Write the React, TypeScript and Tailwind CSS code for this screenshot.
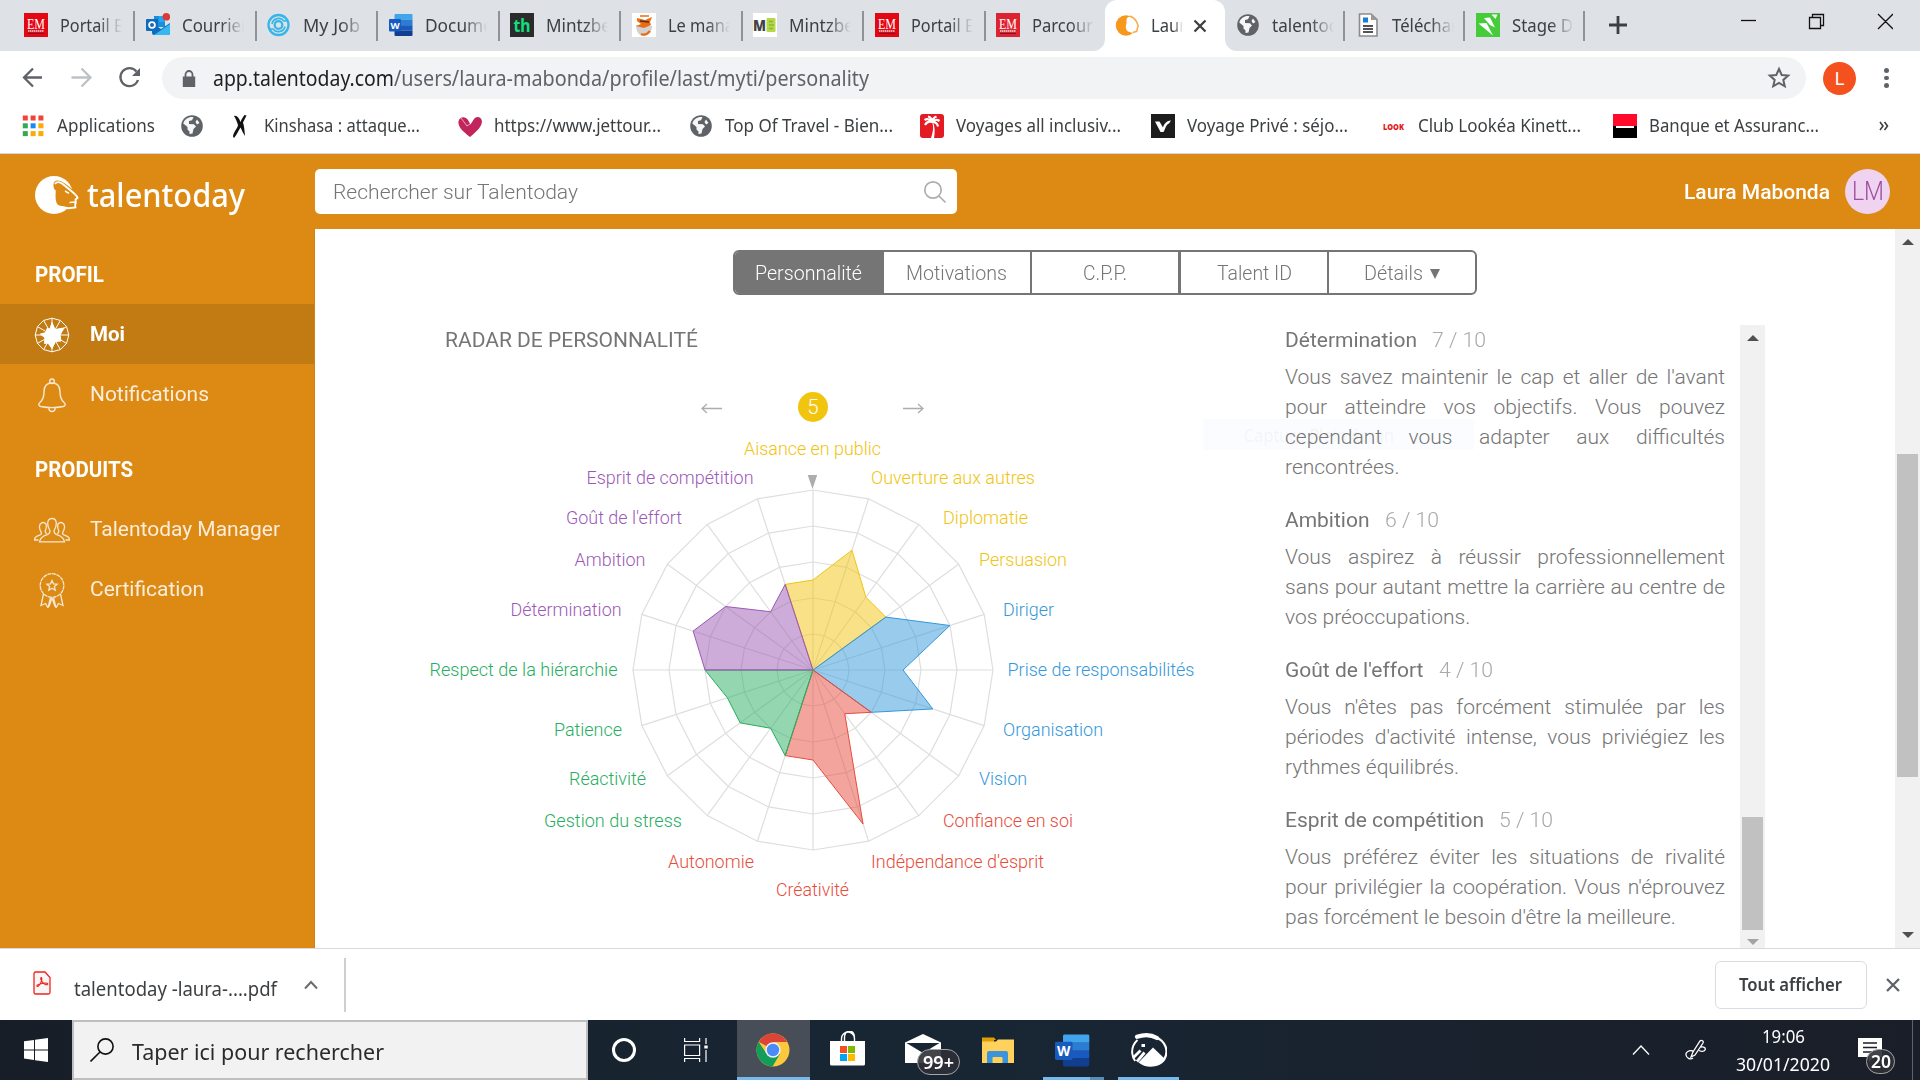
import React, { useLayoutEffect, useRef, useState } from "react";

/* Text run condensed or widened to an exact width. */
function Fit({ w, className = "", children }: { w: number; className?: string; children: React.ReactNode }) {
  const ref = useRef<HTMLSpanElement>(null);
  const [k, setK] = useState(1);
  useLayoutEffect(() => {
    if (ref.current && ref.current.offsetWidth) setK(w / ref.current.getBoundingClientRect().width);
  }, []);
  return (
    <span className={`block shrink-0 whitespace-nowrap ${className}`} style={{ width: w }}>
      <span ref={ref} className="inline-block origin-left" style={{ transform: `scaleX(${k})` }}>
        {children}
      </span>
    </span>
  );
}

/* ---------- small icons (24 x 24) ---------- */
const Svg = ({ children, c = "" }: { children: React.ReactNode; c?: string }) => (
  <svg viewBox="0 0 24 24" className={`h-6 w-6 shrink-0 ${c}`}>{children}</svg>
);

const EmIcon = ({ light }: { light?: boolean }) => (
  <Svg>
    <rect width="24" height="24" fill={light ? "#dd2230" : "#e30613"} />
    <text x="12" y="15.500" fontSize="15" textAnchor="middle" fill="#fff" fontFamily="Liberation Serif, serif" textLength="18" lengthAdjust="spacingAndGlyphs">EM</text>
    <path d="M4 18h16" stroke="#fff" strokeWidth="1.600" strokeDasharray="1.500 .500" opacity=".85" />
    <path d="M4 20.500h16" stroke="#7c1030" strokeWidth="1" />
  </Svg>
);
const OutlookIcon = () => (
  <Svg>
    <path d="M8 3h11v11H8z" fill="#1490df" />
    <path d="M13 3h6v6h-6z" fill="#28a8ea" />
    <path d="M6 10l9 6 9-6v10a2 2 0 0 1-2 2H8a2 2 0 0 1-2-2z" fill="#0f6cbd" />
    <path d="M24 11L8 22h14a2 2 0 0 0 2-2z" fill="#35b8f1" />
    <rect y="6" width="12" height="12" rx="1" fill="#0f6cbd" />
    <circle cx="6" cy="12" r="2.900" fill="none" stroke="#fff" strokeWidth="1.800" />
    <circle cx="20.300" cy="3.800" r="3.800" fill="#d93a3a" />
  </Svg>
);
const JobIcon = () => (
  <Svg>
    <g fill="none" stroke="#35b6e8" strokeWidth="2.300">
      <circle cx="11.500" cy="12" r="10" />
      <circle cx="11.500" cy="12" r="3.800" />
      <path d="M5 11A6.800 6.800 0 0 1 17 8h4.500M18 13.500A6.800 6.800 0 0 1 6 16H2.500" strokeWidth="1.700" />
    </g>
  </Svg>
);
const WordIcon = ({ c = "" }: { c?: string }) => (
  <Svg c={c}>
    <path d="M6.500 1h16a1 1 0 0 1 1 1v4.700h-18V2a1 1 0 0 1 1-1z" fill="#41a5ee" />
    <path d="M5.500 6.700h18v5.500h-18z" fill="#2b7cd3" />
    <path d="M5.500 12.200h18v5.300h-18z" fill="#185abd" />
    <path d="M5.500 17.500h18V22a1 1 0 0 1-1 1h-16a1 1 0 0 1-1-1z" fill="#103f91" />
    <rect y="6" width="12" height="12.500" rx="1" fill="#185abd" />
    <text x="6" y="15.500" fontSize="9.500" fontWeight="700" textAnchor="middle" fill="#fff" fontFamily="Open Sans, sans-serif">W</text>
  </Svg>
);
const ThIcon = () => (
  <Svg>
    <rect width="24" height="24" fill="#2b2b2b" />
    <text x="12" y="18.500" fontSize="17" fontWeight="700" textAnchor="middle" fill="#12e07f" fontFamily="Noto Sans, sans-serif" textLength="17" lengthAdjust="spacingAndGlyphs">th</text>
  </Svg>
);
const CupIcon = () => (
  <Svg>
    <rect width="24" height="24" fill="#fff" />
    <path d="M4 12c0 9 5 11 8 11s8-3 8-10z" fill="#d4d2d0" />
    <path d="M5 5l8 2 7-3-2 5 1 3-7 3-8-2 5-2-4-3z" fill="#e96d13" />
    <path d="M8 8l9 1" stroke="#5b2c14" strokeWidth="1.300" fill="none" />
    <path d="M9 21c3 1.500 6 .500 9-3" stroke="#e96d13" strokeWidth="2.200" fill="none" />
    <path d="M8 3h9" stroke="#e96d13" strokeWidth="1.500" />
  </Svg>
);
const MbIcon = () => (
  <Svg>
    <rect width="24" height="24" fill="#fff" />
    <text x="0" y="17.500" fontSize="16" fontWeight="800" fill="#444" fontFamily="Open Sans, sans-serif" textLength="13" lengthAdjust="spacingAndGlyphs">M</text>
    <rect x="13.500" y="5" width="9" height="14" rx="1" fill="#b5d84a" />
    <path d="M16 8.500h4M16 12h5M16 15.500h4" stroke="#8db534" strokeWidth="1.300" />
  </Svg>
);
const LionIcon = () => (
  <Svg>
    <circle cx="11" cy="12.500" r="10.200" fill="#f7981d" />
    <path d="M11.500 7c0-2.500 2-4 4.500-3 4 2 6 4.500 7.500 8.500l-1 3-.500 3.500-4 1-5-1.500c-2.500-1.500-2.500-5-1.500-8.500z" fill="#fff" />
    <path d="M15 3c3 1 5 3 6.500 5.500l1.800 4.500-1 2.300-.500 3-4 1.200" fill="none" stroke="#f9ab49" strokeWidth="1.500" />
  </Svg>
);
const Globe = () => (
  <Svg>
    <circle cx="12" cy="12" r="10.800" fill="#5f6368" />
    <path d="M13.500 3.200l-1.500 3-3 .8v3l5 .3 2 2.200-2.500 2.500-1 4.500-3 .5v-2.500l-2-2v-2.500L3.300 9.500C4.500 5 9 2.500 13.500 3.200zM17 5.500l2.500 3.500-2.500 1.500-1.500-2.500z" fill="#fff" opacity=".95" />
  </Svg>
);
const DocIcon = () => (
  <Svg>
    <path d="M3.500 1h11.500l6 5.500V23H3.500z" fill="#fff" stroke="#8c8c8c" strokeWidth="1.600" />
    <path d="M15 1v6h6" fill="#9a9a9a" />
    <rect x="7" y="4.500" width="5" height="5" fill="#1a7fd0" />
    <path d="M7 13h10M7 16h10M7 19h10" stroke="#1c1c1c" strokeWidth="1.500" />
  </Svg>
);
const StageIcon = () => (
  <Svg>
    <rect width="24" height="24" fill="#46cb3a" />
    <path d="M2.500 10.500l8-.5 6.500 12.500zM8 5l6-.5 5 10-5-2.500z" fill="#fff" />
    <path d="M15.500 1.500h6l-2 4.500z" fill="#fff" />
  </Svg>
);
const AppsIcon = () => (
  <Svg>
    {["#f44336", "#f44336", "#f44336", "#34a853", "#1a89f5", "#fbab04", "#34a853", "#fbab04", "#fbab04"].map((f, i) => (
      <rect key={i} x={0.800 + (i % 3) * 7.800} y={1.500 + Math.floor(i / 3) * 7.800} width="5" height="5" fill={f} />
    ))}
  </Svg>
);
const CrossFigure = () => (
  <Svg>
    <path d="M6 2c3-1 5.500 3 6.500 6 1-3 3-5.500 4-7l2 .5-3.500 7c1.500 5 1.500 9 2 13.500-1.500-2-3-5.500-4.500-8.500-2 3-3 6-6.500 10.500-1.500-1-1-3 0-5 2-4 4-6 4-8-1-3-2-6-4-9z" fill="#111" />
  </Svg>
);
const HeartIcon = () => (
  <Svg>
    <path d="M12 23C3 16 0 12 .5 7.500 1 3 7 1.500 10 6l2.500 4.500L16 5c2-3.500 7.500-2.500 7.900 2 .3 5-4 9.500-11.900 16z" fill="#c2255c" />
    <path d="M3 4l6 8 3-2" stroke="#fff" strokeWidth="1" fill="none" opacity=".6" />
  </Svg>
);
const PalmIcon = () => (
  <Svg>
    <rect width="24" height="24" rx="3" fill="#e41b23" />
    <path d="M12.500 8c-3-1-6 0-7.500 3M12.500 8C10 5.500 7 4.500 4.500 6M12.500 8C12 5 10 3 8 2.500M12.500 8c0-3 1.500-4.500 4-5.500M12.500 8c2-2.500 5-2.500 7-1M12.500 8c3 0 5 2 5.500 4.500" stroke="#fff" strokeWidth="2.200" fill="none" />
    <path d="M12 8c2 5 1 10-1 16h3c1-5 1-11-1-16z" fill="#fff" />
  </Svg>
);
const VpIcon = () => (
  <Svg>
    <rect width="24" height="24" fill="#1d1d1d" />
    <path d="M4 7.500h4.500l3.500 6c1-3.500 3-6.500 8-7l-2 3c-3 1-3.500 5-5.500 8.500h-3z" fill="#fff" />
  </Svg>
);
const LookIcon = () => (
  <Svg>
    <text x="1" y="15.500" fontSize="9" fontWeight="800" fill="#e21b1b" fontFamily="Open Sans, sans-serif" textLength="21" lengthAdjust="spacingAndGlyphs">LOOK</text>
  </Svg>
);
const SgIcon = () => (
  <Svg>
    <rect width="24" height="12" fill="#ff0a2b" />
    <rect y="12" width="24" height="12" fill="#000" />
    <rect x="3" y="12" width="18" height="2" fill="#fff" />
  </Svg>
);

/* ---------- browser chrome ---------- */
const tabs: [React.ReactNode, string, number, string][] = [
  [<EmIcon />, "Portail E", 63, "w-[121.5px]"],
  [<OutlookIcon />, "Courrier", 66, "w-[121.5px]"],
  [<JobIcon />, "My Job", 57, "w-[121.5px]"],
  [<WordIcon />, "Docume", 68, "w-[121.5px]"],
  [<ThIcon />, "Mintzbe", 65, "w-[121.5px]"],
  [<CupIcon />, "Le mana", 66, "w-[121.5px]"],
  [<MbIcon />, "Mintzbe", 65, "w-[121.5px]"],
  [<EmIcon />, "Portail E", 63, "w-[121.5px]"],
  [<EmIcon light />, "Parcour", 61, "w-[119.5px]"],
  [<Globe />, "talentoc", 65, "w-[120px]"],
  [<DocIcon />, "Téléchar", 66, "w-[120px]"],
  [<StageIcon />, "Stage D", 61, "w-[120px]"],
];

function Tab({ t, sep = true }: { t: (typeof tabs)[number]; sep?: boolean }) {
  return (
    <div className={`flex h-[51px] shrink-0 items-center pl-[10.5px] ${t[3]}`}>
      <div className="-mt-px">{t[0]}</div>
      <div className="-mt-[2px] ml-3 w-[62px] shrink-0 overflow-hidden [mask-image:linear-gradient(90deg,#000_62%,transparent_100%)]">
        <Fit w={t[2]} className="text-[18px] leading-6 text-[#3c4043]">{t[1]}</Fit>
      </div>
      {sep && <div className="ml-auto h-[30px] w-[2px] bg-[#8f9296]" />}
    </div>
  );
}

function TabStrip() {
  return (
    <div className="flex h-[51px] bg-[#dee1e6] pl-[13.5px]">
      {tabs.slice(0, 9).map((t, i) => <Tab key={i} t={t} sep={i < 8} />)}
      <div className="relative flex h-[51px] w-[120px] shrink-0 items-center rounded-t-xl bg-white pl-[10px]">
        <svg viewBox="0 0 144 12" className="absolute -left-3 bottom-0 h-3 w-36"><path d="M0 12A12 12 0 0 0 12 0V12zM144 12A12 12 0 0 1 132 0V12z" fill="#fff" /></svg>
        <div className="-mt-px"><LionIcon /></div>
        <div className="-mt-[2px] ml-3 w-[32px] shrink-0 overflow-hidden [mask-image:linear-gradient(90deg,#000_70%,transparent_100%)]">
          <Fit w={35} className="text-[18px] leading-6 text-[#3c4043]">Laur</Fit>
        </div>
        <svg viewBox="0 0 14 14" className="ml-[10px] h-[14px] w-[14px]"><path d="M1.500 1.500l11 11M12.500 1.500l-11 11" stroke="#3c4043" strokeWidth="2.300" /></svg>
      </div>
      {tabs.slice(9).map((t, i) => <Tab key={i} t={t} />)}
      <svg viewBox="0 0 18 18" className="mt-4 ml-6 h-[18px] w-[18px] shrink-0"><path d="M9 0v18M0 9h18" stroke="#3c4043" strokeWidth="2.800" /></svg>
      <svg viewBox="0 0 152 17" className="mt-[13px] ml-[114px] h-[17px] w-[152px] shrink-0" fill="none" stroke="#111" strokeWidth="1.300">
        <path d="M0 7.500h15" /><path d="M68.500 4.500h11v11h-11zM71.500 4.500v-3h11v11h-3M137 1l15 15M152 1l-15 15" />
      </svg>
    </div>
  );
}

function Toolbar() {
  return (
    <div className="flex h-[54px] items-center bg-white">
      <svg viewBox="0 0 120 24" className="ml-[22px] h-6 w-[120px] shrink-0" fill="none" strokeWidth="2.300">
        <path d="M20 11.500H2M11 2.500l-9 9 9 9" stroke="#5f6368" />
        <path d="M49.500 11.500h18M59.500 2.500l9 9-9 9" stroke="#bdc1c6" />
        <path d="M114.500 5.500A9 9 0 1 0 116 14" stroke="#5f6368" />
        <path d="M118 2v8h-8z" fill="#5f6368" />
      </svg>
      <div className="ml-5 flex h-[42px] w-[1644px] shrink-0 items-center rounded-full bg-[#f1f3f4] pl-[20px]">
        <svg viewBox="0 0 14 18" className="mt-px h-[18px] w-[14px]"><path d="M.8 6.500h12.400V17H.8z" fill="#5f6368" /><path d="M3.500 7V4.500a3.500 3.500 0 0 1 7 0V7" fill="none" stroke="#5f6368" strokeWidth="1.800" /></svg>
        <Fit w={181} className="mt-[2px] ml-[17px] text-[21px] text-[#202124]">app.talentoday.com</Fit>
        <Fit w={475} className="mt-[2px] text-[21px] text-[#5f6368]">/users/laura-mabonda/profile/last/myti/personality</Fit>
        <svg viewBox="0 0 24 24" className="mr-[15px] ml-auto h-6 w-6"><path d="M12 3l2.700 6 6.500.6-4.900 4.300 1.500 6.400L12 17l-5.800 3.300 1.500-6.400L2.800 9.600 9.300 9z" fill="none" stroke="#5f6368" strokeWidth="2" /></svg>
      </div>
      <div className="ml-[17px] flex h-[33px] w-[33px] items-center justify-center rounded-full bg-[#f4511e] font-[Roboto] text-[18px] text-white">L</div>
      <div className="ml-[28px] flex flex-col gap-[3px]">
        {[0, 1, 2].map((i) => <div key={i} className="h-[4.5px] w-[4.5px] rounded-full bg-[#5f6368]" />)}
      </div>
    </div>
  );
}

const marks: [React.ReactNode, string, number, string][] = [
  [<AppsIcon />, "Applications", 98, "w-[158.5px]"],
  [<Globe />, "", 0, "w-[48px]"],
  [<CrossFigure />, "Kinshasa : attaque...", 156, "w-[230px]"],
  [<HeartIcon />, "https://www.jettour...", 167, "w-[231px]"],
  [<Globe />, "Top Of Travel - Bien...", 168, "w-[231px]"],
  [<PalmIcon />, "Voyages all inclusiv...", 165, "w-[231px]"],
  [<VpIcon />, "Voyage Privé : séjo...", 161, "w-[231px]"],
  [<LookIcon />, "Club Lookéa Kinett...", 163, "w-[231px]"],
  [<SgIcon />, "Banque et Assuranc...", 170, "w-[266px]"],
];

function Bookmarks() {
  return (
    <div className="flex h-[49px] items-center border-b border-[#d5d7da] bg-white pb-[6px] pl-[21.5px]">
      {marks.map((m, i) => (
        <div key={i} className={`flex shrink-0 items-center ${m[3]}`}>
          {m[0]}
          {m[1] && <Fit w={m[2]} className="-mt-px ml-[11.5px] text-[18px] text-[#3c4043]">{m[1]}</Fit>}
        </div>
      ))}
      <svg viewBox="0 0 10 10" className="h-[10px] w-[10px]" fill="none" stroke="#3c4043" strokeWidth="1.600"><path d="M1 1l3 4-3 4M5.500 1l3 4-3 4" /></svg>
    </div>
  );
}

/* ---------- page ---------- */
function Header() {
  return (
    <div className="flex h-[75px] items-center bg-[#dc8a14] font-[Roboto]">
      <svg viewBox="0 0 46 40" className="mt-[7px] ml-[35px] h-10 w-[46px] shrink-0">
        <circle cx="19" cy="20" r="19" fill="#fff" />
        <path d="M18.500 10c0-4 3-5.500 7-4 6 3 12 8 16 12.500l1.500 2.500-1.500 2 .5 3-1 1.500.3 4-8 1.500-9-2.500c-4-1.500-4-8-3.500-15-2-1-2.300-4-2.300-5.500z" fill="#dc8a14" />
        <path d="M20 9c3-4 7-1 12 3.500 3 2.500 7 5 10 9l.500 1.500-2 1.500.3 3.500-.6 1 .2 3.500-7 .8-8-1.500" fill="none" stroke="#fff" strokeWidth="1.900" />
        <path d="M30 16l4 2.300M34.500 27.500l6-.500" stroke="#fff" strokeWidth="1.500" />
      </svg>
      <Fit w={158} className="mt-[6px] ml-[6px] font-['Noto_Sans'] text-[33px] leading-10 font-medium text-white">talentoday</Fit>
      <div className="ml-[70px] flex h-[45px] w-[642px] shrink-0 items-center rounded-[5px] bg-white pl-[18px]">
        <Fit w={245} className="mt-[2px] text-[21px] font-light text-[#757575]">Rechercher sur Talentoday</Fit>
        <svg viewBox="0 0 24 24" className="mr-[10px] ml-auto h-6 w-6" fill="none" stroke="#aeaeae" strokeWidth="1.700"><circle cx="10" cy="10" r="8.200" /><path d="M16 16l6.500 6.500" /></svg>
      </div>
      <Fit w={146} className="mt-[2px] ml-auto text-[21px] font-medium text-white">Laura Mabonda</Fit>
      <div className="mr-[30px] ml-[15px] flex h-[45px] w-[45px] items-center justify-center rounded-full bg-[#efd3f0] text-[25px] font-light text-[#9b4f9e]"><Fit w={32}>LM</Fit></div>
    </div>
  );
}

const pt = (i: number, r: number, cx: number, cy: number) => {
  const a = (i * Math.PI) / 10;
  return `${(cx + r * Math.sin(a)).toFixed(2)},${(cy - r * Math.cos(a)).toFixed(2)}`;
};

const MoiIcon = () => (
  <svg viewBox="0 0 36 36" className="h-9 w-9 shrink-0" stroke="#fff" fill="none" strokeWidth="1">
    <path d={"M" + Array.from({ length: 12 }, (_, i) => `${18 + 16.800 * Math.sin((i * Math.PI) / 6)},${18 - 16.800 * Math.cos((i * Math.PI) / 6)}`).join("L") + "Z"} />
    <path d={Array.from({ length: 12 }, (_, i) => `M18,18L${18 + 16.800 * Math.sin((i * Math.PI) / 6)},${18 - 16.800 * Math.cos((i * Math.PI) / 6)}`).join("")} />
    <path d="M18 5.500l3 7L30 11l-4 7 1 6-5.500.500-3.500 7-4-5.500-3.500.500.500-5.500L6.500 17l5.500-1.500 1-4 3 .500z" fill="#fff" />
  </svg>
);
const BellIcon = () => (
  <svg viewBox="0 0 36 36" className="h-9 w-9 shrink-0" stroke="#f6e8d3" fill="none" strokeWidth="1.400">
    <circle cx="18" cy="4.300" r="2.300" />
    <path d="M18 6c-5.500 0-8 4-8 9 0 6-1.500 8.500-4.500 11-1.800 2 0 3.500 2.500 3.800 6 1 14 1 20 0 2.500-.300 4.300-1.800 2.500-3.800-3-2.500-4.500-5-4.500-11 0-5-2.500-9-8-9zM14.800 30.800c0 5 6.400 5 6.400 0" />
  </svg>
);
const PeopleIcon = () => (
  <svg viewBox="0 0 36 36" className="h-9 w-9 shrink-0" stroke="#f6e8d3" fill="none" strokeWidth="1.300">
    <path d="M18 6.500c-3 0-4.300 2-4.300 5 0 3 .800 4.500 2 6.500 1 2-.500 4-3 4.800-4 1.200-6.500 2.500-7.200 7h25c-.700-4.500-3.200-5.800-7.200-7-2.500-.800-4-2.800-3-4.800 1.200-2 2-3.500 2-6.500 0-3-1.300-5-4.300-5z" />
    <path d="M12 12c-2.500-3-7-1-6.500 3.500.200 3 2 4.500 2 6s-3 2-5 3-2 2-2 3.500h4M12 12c1 3 0 5-.800 7 0 1 .500 2 1.500 2.800M24 12c2.500-3 7-1 6.500 3.500-.200 3-2 4.500-2 6s3 2 5 3 2 2 2 3.500h-4M24 12c-1 3 0 5 .800 7 0 1-.500 2-1.500 2.800" />
  </svg>
);
const AwardIcon = () => (
  <svg viewBox="0 0 36 36" className="h-9 w-9 shrink-0" stroke="#f6e8d3" fill="none" strokeWidth="1.300">
    <circle cx="18" cy="13.500" r="11.800" strokeDasharray="4 .600" />
    <path d="M18 8.500l1.500 3.400 3.600.300-2.700 2.400.800 3.600-3.200-1.900-3.200 1.900.800-3.600-2.700-2.400 3.600-.300zM9.500 22L7 33.500l4.500-2 2.500 4.300 2.500-10.500M26.500 22L29 33.500l-4.500-2-2.500 4.300-2.500-10.500M18 26l-3 8.500M18 26l3 8.500" />
  </svg>
);

function SideItem({ icon, label, w, on }: { icon: React.ReactNode; label: string; w: number; on?: boolean }) {
  return (
    <div className={`flex h-[60px] items-center pl-[34px] text-[21px] ${on ? "bg-[#c17b12] font-bold text-white" : "text-[#faeddb]"}`}>
      <div className="mt-[2px]">{icon}</div>
      <Fit w={w} className="mt-[2px] ml-5">{label}</Fit>
    </div>
  );
}

function Sidebar() {
  return (
    <div className="w-[315px] shrink-0 border-r border-[#cf8212] bg-[#dc8a14] pt-[15px] font-[Roboto]">
      <div className="flex h-[60px] items-center pt-[2px] pl-[34.5px] text-[21.5px] font-bold text-white"><Fit w={69}>PROFIL</Fit></div>
      <SideItem icon={<MoiIcon />} label="Moi" w={35} on />
      <SideItem icon={<BellIcon />} label="Notifications" w={119} />
      <div className="mt-[15px] flex h-[60px] items-center pt-[2px] pl-[34.5px] text-[21.5px] font-bold text-white"><Fit w={98}>PRODUITS</Fit></div>
      <SideItem icon={<PeopleIcon />} label="Talentoday Manager" w={190} />
      <SideItem icon={<AwardIcon />} label="Certification" w={114} />
    </div>
  );
}

const Y = "#f1c40f", B = "#3498db", R = "#e74c3c", G = "#27ae60", P = "#9b59b6";
type Anchor = "start" | "middle" | "end";
/* label, score, x, baseline, width, anchor, colour */
const axes: [string, number, number, number, number, Anchor, string][] = [
  ["Aisance en public", 5, 382.500, 455, 137, "middle", Y],
  ["Ouverture aux autres", 7, 441, 484, 164, "start", Y],
  ["Diplomatie", 5, 513, 524, 85, "start", Y],
  ["Persuasion", 5, 549, 566, 88, "start", Y],
  ["Diriger", 8, 573, 616, 51, "start", B],
  ["Prise de responsabilités", 5, 577.500, 675.500, 187, "start", B],
  ["Organisation", 7, 573, 736, 100, "start", B],
  ["Vision", 4, 549, 785, 48, "start", B],
  ["Confiance en soi", 3, 513, 827, 130, "start", R],
  ["Indépendance d'esprit", 9, 441, 867.500, 173, "start", R],
  ["Créativité", 5, 382.500, 896, 73, "middle", R],
  ["Autonomie", 5, 324, 867.500, 86, "end", R],
  ["Gestion du stress", 4, 252, 827, 138, "end", G],
  ["Réactivité", 5, 216, 785, 77, "end", G],
  ["Patience", 5, 192, 736, 68, "end", G],
  ["Respect de la hiérarchie", 6, 187.500, 675.500, 188, "end", G],
  ["Détermination", 7, 191.500, 616, 111, "end", P],
  ["Ambition", 6, 215.500, 566, 71, "end", P],
  ["Goût de l'effort", 4, 252, 524, 116, "end", P],
  ["Esprit de compétition", 5, 323.500, 484, 167, "end", P],
];

function Radar() {
  const cx = 383, cy = 290;
  return (
    <svg viewBox="0 0 780 540" className="h-[540px] w-[780px]" fontFamily="Roboto, sans-serif">
      <g fill="none" stroke="#dedede" strokeWidth="1.200">
        {[36, 72, 108, 144, 180].map((r) => <polygon key={r} points={axes.map((_, i) => pt(i, r, cx, cy)).join(" ")} />)}
        {axes.map((_, i) => <path key={i} d={`M${cx},${cy}L${pt(i, 180, cx, cy)}`} />)}
      </g>
      {[[-1, Y], [3, B], [7, R], [11, G], [15, P]].map(([s, c]) => (
        <polygon
          key={c}
          points={[`${cx},${cy}`, ...[0, 1, 2, 3, 4].map((k) => { const i = (Number(s) + k + 20) % 20; return pt(i, axes[i][1] * 18, cx, cy); })].join(" ")}
          fill={String(c)} fillOpacity=".5" stroke={String(c)} strokeWidth="1"
        />
      ))}
      {axes.map(([t, , x, y, w, a, c]) => (
        <text key={t} x={x} y={y - 380} fontSize="18" fontWeight="300" textAnchor={a} fill={c} textLength={w} lengthAdjust="spacingAndGlyphs">{t}</text>
      ))}
      <circle cx={cx} cy="27" r="15" fill={Y} />
      <text x={cx} y="34" fontSize="20.500" fontWeight="300" textAnchor="middle" fill="#fff">5</text>
      <path d="M292 28.500h-20M277 24l-5 4.500 5 4.500M473 28.500h20M488 24l5 4.500-5 4.500" fill="none" stroke="#adadad" strokeWidth="1.300" />
      <path d="M377.700 95h9.500l-4.700 14z" fill="#adadad" />
    </svg>
  );
}

const traits: [string, number, number, string[]][] = [
  ["Détermination", 132, 7, ["Vous savez maintenir le cap et aller de l'avant", "pour atteindre vos objectifs. Vous pouvez", "cependant vous adapter aux difficultés", "rencontrées."]],
  ["Ambition", 84.500, 6, ["Vous aspirez à réussir professionnellement", "sans pour autant mettre la carrière au centre de", "vos préoccupations."]],
  ["Goût de l'effort", 138.500, 4, ["Vous n'êtes pas forcément stimulée par les", "périodes d'activité intense, vous priviégiez les", "rythmes équilibrés."]],
  ["Esprit de compétition", 199, 5, ["Vous préférez éviter les situations de rivalité", "pour privilégier la coopération. Vous n'éprouvez", "pas forcément le besoin d'être la meilleure."]],
];

const Tri = ({ down, c = "#505050" }: { down?: boolean; c?: string }) => (
  <svg viewBox="0 0 12 6" className="h-[6px] w-[12px]"><path d={down ? "M0 0h12L6 6z" : "M0 6h12L6 0z"} fill={c} /></svg>
);

function Main() {
  const seg = "flex items-center justify-center";
  return (
    <div className="relative flex flex-1 bg-white font-[Roboto] text-[#757575]">
      <div className="absolute top-[190px] left-[888px] flex h-[31px] w-[271px] items-center bg-[#fbfcff] pt-[2px] pl-[41px] text-[#f4f4f5]">
        <Fit w={150} className="font-['Open_Sans'] text-[18px]">Capture Plein écran</Fit>
      </div>
      <div className="relative flex-1">
        <div className="mt-[21px] ml-[418px] flex h-[45px] w-[744px] overflow-hidden rounded-[6px] border-2 border-[#757575] text-[20px] font-light">
          <div className={`${seg} w-[149px] bg-[#757575] pr-[3px] text-white`}><Fit w={107}>Personnalité</Fit></div>
          <div className={`${seg} w-[148px] border-r-2 border-[#757575] pr-px`}><Fit w={101}>Motivations</Fit></div>
          <div className={`${seg} w-[149px] border-r-[3px] border-[#757575]`}><Fit w={44}>C.P.P.</Fit></div>
          <div className={`${seg} w-[148px] border-r-2 border-[#757575]`}><Fit w={75}>Talent ID</Fit></div>
          <div className={`${seg} w-[146px] gap-[7px] pr-px`}>
            <Fit w={59}>Détails</Fit>
            <svg viewBox="0 0 10 10" className="mt-[2px] h-[10px] w-[10px]"><path d="M0 0h10L5 10z" fill="#757575" /></svg>
          </div>
        </div>
        <div className="mt-[30px] flex">
          <div className="ml-[115px] w-[855px] shrink-0">
            <Fit w={253} className="ml-[15px] text-[21px] leading-[30px]">RADAR DE PERSONNALITÉ</Fit>
            <div className="mt-[25px]"><Radar /></div>
          </div>
          <div className="w-[440px] shrink-0 text-[21px] leading-[30px]">
            {traits.map(([t, w, n, lines], k) => (
              <div key={t} className={k ? "mt-[23px]" : ""}>
                <div className="flex gap-[15px]">
                  <Fit w={w}>{t}</Fit>
                  <Fit w={54} className="font-light text-[#a9a9a9]">{n} / 10</Fit>
                </div>
                <div className="mt-[7px] font-light">
                  {lines.map((l, i) => (
                    <div key={i} className={`whitespace-nowrap ${i < lines.length - 1 ? "[text-align-last:justify]" : ""}`}>{l}</div>
                  ))}
                </div>
              </div>
            ))}
          </div>
          <div className="ml-[15px] flex h-[623px] w-[25px] shrink-0 flex-col items-center bg-[#f1f1f1] pt-[10px]">
            <Tri />
            <div className="mt-[476px] h-[113px] w-[21px] bg-[#c1c1c1]" />
            <div className="mt-[9px]"><Tri down c="#a3a3a3" /></div>
          </div>
        </div>
      </div>
      <div className="flex w-[25px] shrink-0 flex-col items-center bg-[#f1f1f1] pt-[10px]">
        <Tri />
        <div className="mt-[209px] h-[323px] w-[21px] bg-[#c1c1c1]" />
        <div className="mt-[155px]"><Tri down /></div>
      </div>
    </div>
  );
}

function Downloads() {
  return (
    <div className="flex h-[72px] items-center border-t border-[#d8dadd] bg-white">
      <svg viewBox="0 0 18 24" className="mb-1 ml-[33px] h-6 w-[18px]" fill="none" stroke="#f5221b">
        <path d="M2.500 1H12l5 5.500v15A1.500 1.500 0 0 1 15.500 23h-13A1.500 1.500 0 0 1 1 21.500v-19A1.500 1.500 0 0 1 2.500 1z" fill="#f6f6f6" strokeWidth="1.300" />
        <path d="M8.500 6.500c-2 0 0 4.500 3 6.500 2.500 1.500 4 .500 3-.500s-7-.200-10 1.500c-1.500 1 0 2.500 1.500.500C7.500 12.500 9.500 8.500 8.500 6.500z" strokeWidth="1.100" />
      </svg>
      <Fit w={203} className="mt-[9px] ml-[22.5px] text-[19.5px] text-[#3c4043]">talentoday -laura-....pdf</Fit>
      <svg viewBox="0 0 14 10" className="ml-[27px] h-[10px] w-[14px]"><path d="M1 8.500l6-6.500 6 6.500" fill="none" stroke="#6a6d70" strokeWidth="2" /></svg>
      <div className="ml-[26px] h-[54px] w-[2px] bg-[#cfcfcf]" />
      <div className="ml-auto flex h-[48px] w-[152px] items-center justify-center rounded-[6px] border border-[#dadce0]">
        <Fit w={103} className="-mt-px mr-px text-[18px] font-semibold text-[#3c4043]">Tout afficher</Fit>
      </div>
      <svg viewBox="0 0 14 14" className="mr-5 ml-[19px] h-[14px] w-[14px]"><path d="M1 1l12 12M13 1L1 13" stroke="#5f6368" strokeWidth="2.300" /></svg>
    </div>
  );
}

function Taskbar() {
  return (
    <div className="flex h-[60px] bg-linear-to-r from-[#171e28] via-[#182634] to-[#1a1e28] text-white">
      <div className="flex w-[72px] items-center justify-center">
        <svg viewBox="0 0 24 24" className="h-6 w-6" fill="#fff"><path d="M0 3.300L10 2v9.400H0zM11 1.800L24 0v11.400H11zM0 12.400h10v9.500L0 20.600zM11 12.400h13V24l-13-1.800z" /></svg>
      </div>
      <div className="flex w-[516px] items-center border-2 border-[#bfbfbf] bg-[#f2f2f2] pl-4">
        <svg viewBox="0 0 24 24" className="h-6 w-6" fill="none" stroke="#111" strokeWidth="1.600"><circle cx="15.500" cy="8.500" r="7.600" /><path d="M10 14L.5 23.500" /></svg>
        <Fit w={252} className="mt-1 ml-[18px] text-[22.5px] text-[#2b2b2b]">Taper ici pour rechercher</Fit>
      </div>
      <div className="flex w-[72px] items-center justify-center"><div className="h-6 w-6 rounded-full border-[3.5px] border-white" /></div>
      <div className="flex w-[77px] items-center pl-6">
        <svg viewBox="0 0 24 24" className="h-6 w-6" fill="none" stroke="#fff" strokeWidth="1.200"><path d="M.6 0v3.500h15V0M.6 24v-3.500h15V24M.6 7h15v10.500h-15zM22 0v6M22 12v12" /><path d="M20.300 7.500h3.400v3h-3.400z" fill="#fff" stroke="none" /></svg>
      </div>
      <div className="flex w-[73px] items-center justify-center border-b-[3px] border-[#76b9ed] bg-[#474e58]">
        <svg viewBox="0 0 34 34" className="mt-[2px] mr-[2px] h-[34px] w-[34px]">
          <circle cx="17" cy="17" r="16.500" fill="#fbc93b" />
          <path d="M17 17L2.700 8.700A16.500 16.500 0 0 1 31.300 9H17z" fill="#dc4437" />
          <path d="M2.700 8.700A16.500 16.500 0 0 0 16.500 33.500L24 21 17 17 10 20z" fill="#129d5a" />
          <circle cx="17" cy="17" r="7.700" fill="#f1f1f1" /><circle cx="17" cy="17" r="6.200" fill="#4b8bf5" />
        </svg>
      </div>
      <div className="flex w-[95px] items-center pl-5">
        <svg viewBox="0 0 35 35" className="-mt-[3px] h-[35px] w-[35px]">
          <path d="M11.500 10V7.500a6.500 6.500 0 0 1 13 0V10M14.500 10V6a5 6 0 0 1 10 0" fill="none" stroke="#fff" strokeWidth="1.400" />
          <path d="M0 10h35v23a1.500 1.500 0 0 1-1.500 1.500h-32A1.500 1.500 0 0 1 0 33z" fill="#fff" />
          <path d="M10 15h7v7h-7z" fill="#f25022" /><path d="M18 15h7v7h-7z" fill="#7fba00" /><path d="M10 23h7v7h-7z" fill="#00a4ef" /><path d="M18 23h7v7h-7z" fill="#ffb900" />
        </svg>
      </div>
      <div className="relative flex w-[77px] items-center">
        <svg viewBox="0 0 36 30" className="-mt-[3px] h-[30px] w-9" fill="#fff"><path d="M0 8.500L18 0l18 8.500V29H0z" /><path d="M1.500 9h33L18 19z" fill="#182634" /></svg>
        <div className="absolute top-[29px] left-[12px] flex h-[26px] w-[43px] items-center justify-center rounded-full border border-[#a5a5a5] bg-[#2d3036]/90"><Fit w={31} className="text-[18px] font-semibold">99+</Fit></div>
      </div>
      <div className="flex w-[61px] items-center">
        <svg viewBox="0 0 32 26" className="h-[26px] w-8"><path d="M0 .5h12l2 2.500h-2v3H0z" fill="#e09e00" /><path d="M0 4.500h14l2-2h16V26H0z" fill="#ffd25e" /><path d="M5 26V16a2 2 0 0 1 2-2h17a2 2 0 0 1 2 2v10h-5.500v-5a1 1 0 0 0-1-1h-8a1 1 0 0 0-1 1v5z" fill="#3d94dc" /></svg>
      </div>
      <div className="flex w-[61px] flex-col">
        <div className="flex h-[57px] items-center pt-[3px] pl-3"><WordIcon c="h-[35px]! w-[35px]!" /></div>
        <div className="flex h-[3px]"><div className="w-[47px] bg-[#76b9ed]" /><div className="flex-1 bg-[#5a8db4]" /></div>
      </div>
      <div className="ml-[14px] flex w-[61px] items-center justify-center border-b-[3px] border-[#76b9ed] pt-[3px]">
        <svg viewBox="0 0 36 34" className="h-[34px] w-9" fill="none" stroke="#fff">
          <path d="M6 3.800C12 1.800 20 1.500 26 5" strokeWidth="4.200" strokeLinecap="round" />
          <path d="M25 4.500a16 15 0 0 1 8 22" strokeWidth="2.200" />
          <path d="M7.500 29.500L22 14.500l12.500 12C29 35 15 36 7.500 29.500z" fill="#fff" stroke="none" />
          <path d="M6.500 7A16 16 0 0 0 1.200 20c.300 4 1.500 6 3 8" strokeWidth="2" />
          <path d="M2.500 24.500l7-7M6 28.500l7.500-9" strokeWidth="2.800" /><path d="M10.500 11h3.500v3h-3.500z" fill="#fff" stroke="none" />
        </svg>
      </div>
      <div className="ml-auto flex items-center">
        <svg viewBox="0 0 18 10" className="h-[10px] w-[18px]"><path d="M1 9.500l8-8.500 8 8.500" fill="none" stroke="#fff" strokeWidth="1.300" /></svg>
        <svg viewBox="0 0 22 22" className="ml-[35px] h-[22px] w-[22px]" fill="none" stroke="#fff" strokeWidth="1.300"><path d="M6 18L8 13 15 2c1.500-1.500 4 .200 3 2l-8 12zM8 12c-4-1-7.500 1-7 4s4 5 7 3M16 8c3-.500 5 1 4 3s-4 1.500-6 .500" /></svg>
        <div className="ml-[29px] flex w-[94px] flex-col items-center text-[18px] leading-[28px]">
          <Fit w={43}>19:06</Fit><Fit w={94}>30/01/2020</Fit>
        </div>
        <div className="relative ml-7 h-[24px] w-[54px]">
          <svg viewBox="0 0 24 24" className="h-6 w-6"><path d="M0 0h24v19h-8l-5 5v-5H0z" fill="#fff" /><path d="M5 5h14M5 9.500h14M5 14h9" stroke="#1a1e28" strokeWidth="1.300" /></svg>
          <div className="absolute top-[11px] left-[8px] flex h-[25px] w-[29px] items-center justify-center rounded-full border border-[#a5a5a5] bg-[#2d3036]/90"><Fit w={20} className="text-[18px] font-semibold">20</Fit></div>
        </div>
        <div className="mr-[7px] h-[60px] w-px bg-[#5d636c]" />
      </div>
    </div>
  );
}

export default function App() {
  return (
    <div className="flex h-[1080px] w-[1920px] flex-col overflow-hidden bg-white font-['Noto_Sans',sans-serif]">
      <TabStrip />
      <Toolbar />
      <Bookmarks />
      <Header />
      <div className="flex h-[719px] shrink-0 overflow-hidden">
        <Sidebar />
        <Main />
      </div>
      <Downloads />
      <Taskbar />
    </div>
  );
}
